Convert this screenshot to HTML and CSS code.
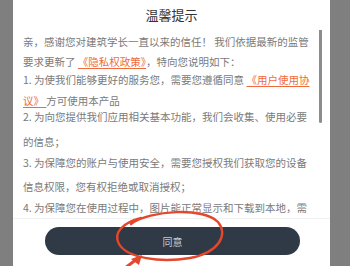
FILE: index.html
```html
<!DOCTYPE html>
<html lang="zh-CN">
<head>
<meta charset="utf-8">
<title>温馨提示</title>
<link rel="stylesheet" href="styles.css">
</head>
<body>
<div class="screen">
  <div class="dialog">
    <div class="title">温馨提示</div>
    <div class="content">
      <div class="para p1">
        <div class="ln">亲，感谢您对建筑学长一直以来的信任！ 我们依据最新的监管</div>
        <div class="ln">要求更新了 <a class="link">《隐私权政策》</a>，特向您说明如下：</div>
      </div>
      <div class="para p2">
        <div class="ln">1. 为使我们能够更好的服务您，需要您遵循同意 <a class="link">《用户使用协</a></div>
        <div class="ln"><a class="link">议》 </a>方可使用本产品</div>
      </div>
      <div class="para p3">
        <div class="ln">2. 为向您提供我们应用相关基本功能，我们会收集、使用必要</div>
        <div class="ln">的信息；</div>
      </div>
      <div class="para p4">
        <div class="ln">3. 为保障您的账户与使用安全，需要您授权我们获取您的设备</div>
        <div class="ln">信息权限，您有权拒绝或取消授权；</div>
      </div>
      <div class="para p5">
        <div class="ln">4. 为保障您在使用过程中，图片能正常显示和下载到本地，需</div>
      </div>
      <div class="scrollbar"></div>
    </div>
    <div class="footer">
      <button class="agree">同意</button>
    </div>
  </div>
  <svg class="mark" width="350" height="266" viewBox="0 0 350 266">
    <path d="M131 224 C 150 210, 204 207, 218 222 C 229 235, 218 253, 190 258 C 160 263, 127 258, 119 244 C 113 233, 122 223, 141 218" fill="none" stroke="#e4472c" stroke-width="2.4" stroke-linecap="round"/>
    <path d="M125 268 L 137 259" fill="none" stroke="#e4472c" stroke-width="3" stroke-linecap="round"/>
    <path d="M142 255 L 131 259 L 139 265 Z" fill="#e4472c"/>
  </svg>
</div>
</body>
</html>
```
FILE: styles.css
```css
* { box-sizing: border-box; }
html, body { margin: 0; padding: 0; }
body {
  background: #7f7f7f;
  font-family: "Noto Sans CJK SC", "Noto Sans", sans-serif;
}
.screen {
  position: relative;
  width: 350px;
  height: 266px;
  overflow: hidden;
}
.dialog {
  margin-left: 13px;
  width: 317px;
  height: 266px;
  background: #fff;
  display: flex;
  flex-direction: column;
}
.title {
  height: 30px;
  padding-top: 5px;
  line-height: 20px;
  text-align: center;
  font-size: 13px;
  color: #333;
}
.content {
  position: relative;
  height: 189px;
  overflow: hidden;
  padding: 3px 0 0 10px;
  border-bottom: 1px solid #f0f0f0;
  font-size: 10.5px;
  color: #7a7a7a;
}
.para { display: flex; flex-direction: column; }
.ln {
  height: 17px;
  line-height: 17px;
  white-space: nowrap;
}
.p1 { row-gap: 3px; }
.p2 { row-gap: 4px; margin-top: 1px; }
.p3 { row-gap: 8px; margin-top: -1px; }
.p4 { row-gap: 7px; margin-top: 4px; }
.p5 { margin-top: 4px; }
.link {
  color: #ef6b3d;
  text-decoration: underline;
  text-underline-offset: 2px;
}
.scrollbar {
  position: absolute;
  left: 306px;
  top: -2px;
  width: 3px;
  height: 95px;
  border-radius: 2px;
  background: #8c8c8c;
}
.footer {
  padding: 8px 30px 0 32px;
}
.agree {
  display: block;
  width: 100%;
  height: 28px;
  border: 0;
  border-radius: 14px;
  background: #2f3a46;
  color: #c7ccd2;
  font-family: "Noto Sans CJK SC", sans-serif;
  font-size: 10px;
  padding: 0;
}
.mark {
  position: absolute;
  left: 0;
  top: 0;
  pointer-events: none;
}
```
